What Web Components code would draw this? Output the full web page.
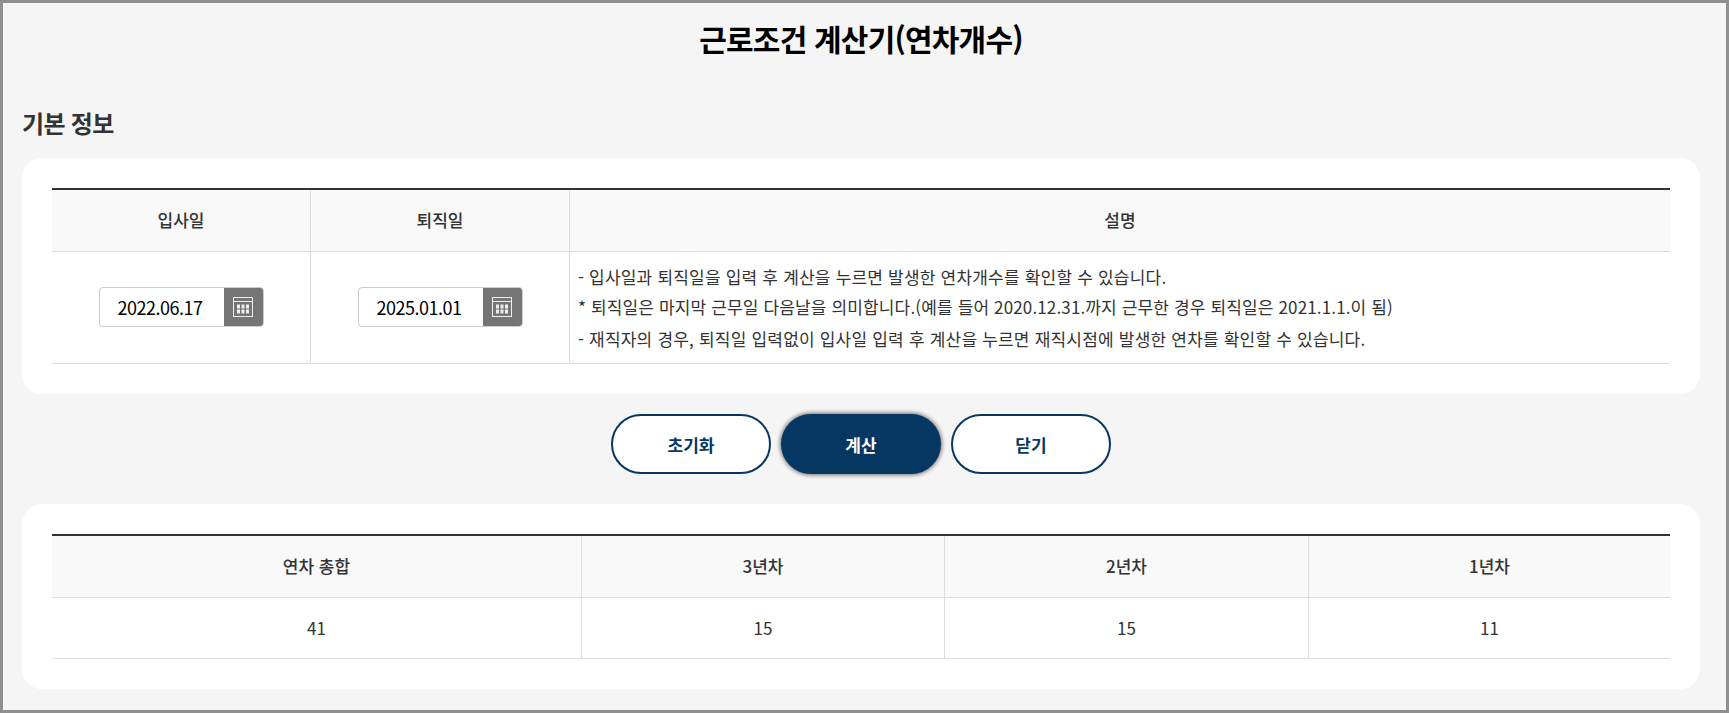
<!DOCTYPE html>
<html lang="ko">
<head>
<meta charset="utf-8">
<title>근로조건 계산기(연차개수)</title>
<style>
html, body { margin: 0; padding: 0; }
body { font-family: "Noto Sans CJK KR", "Noto Sans", sans-serif; color: #333; }
</style>
</head>
<body>
<calc-app>
    <span slot="title">근로조건 계산기(연차개수)</span>
    <section-title>기본 정보</section-title>
    <white-card>
        <data-table columns="259px 259px 1fr" rows="62px 112px">
            <table-cell head>입사일</table-cell>
            <table-cell head>퇴직일</table-cell>
            <table-cell head last>설명</table-cell>
            <table-cell><date-field value="2022.06.17"></date-field></table-cell>
            <table-cell><date-field value="2025.01.01"></date-field></table-cell>
            <table-cell last left>
                <div>- 입사일과 퇴직일을 입력 후 계산을 누르면 발생한 연차개수를 확인할 수 있습니다.</div>
                <div style="margin: -1px 0 1px; letter-spacing: 0.14px">* 퇴직일은 마지막 근무일 다음날을 의미합니다.(예를 들어 2020.12.31.까지 근무한 경우 퇴직일은 2021.1.1.이 됨)</div>
                <div>- 재직자의 경우, 퇴직일 입력없이 입사일 입력 후 계산을 누르면 재직시점에 발생한 연차를 확인할 수 있습니다.</div>
            </table-cell>
        </data-table>
    </white-card>
    <button-row>
        <pill-button>초기화</pill-button>
        <pill-button primary>계산</pill-button>
        <pill-button>닫기</pill-button>
    </button-row>
    <white-card>
        <data-table columns="530px 363px 364px 1fr" rows="62px 61px">
            <table-cell head>연차 총합</table-cell>
            <table-cell head>3년차</table-cell>
            <table-cell head>2년차</table-cell>
            <table-cell head last>1년차</table-cell>
            <table-cell>41</table-cell>
            <table-cell>15</table-cell>
            <table-cell>15</table-cell>
            <table-cell last>11</table-cell>
        </data-table>
    </white-card>
</calc-app>

<script>
// --- страница целиком ---
class CalcApp extends HTMLElement {
    constructor() {
        super();
        this.attachShadow({mode: 'open'});
        this.shadowRoot.innerHTML = `<style>
            :host { display: block; box-sizing: border-box; width: 100%; height: 713px; overflow: hidden;
                    border: 3px solid #8f8f8f; background: #f5f5f5; padding: 0 26px 0 19px; }
            h1 { margin: 0; height: 74px; line-height: 71px; text-align: center; font-size: 30px; font-weight: 700;
                 color: #000; letter-spacing: -0.8px; }
        </style><h1><slot name="title"></slot></h1><slot></slot>`;
    }
}
customElements.define('calc-app', CalcApp);

class SectionTitle extends HTMLElement {
    constructor() {
        super();
        this.attachShadow({mode: 'open'});
        this.shadowRoot.innerHTML = `<style>
            :host { display: block; height: 81px; line-height: 91px; font-size: 24px; font-weight: 700;
                    color: #333; letter-spacing: -0.7px; }
        </style><slot></slot>`;
    }
}
customElements.define('section-title', SectionTitle);

class WhiteCard extends HTMLElement {
    constructor() {
        super();
        this.attachShadow({mode: 'open'});
        this.shadowRoot.innerHTML = `<style>
            :host { display: block; background: #fff; border-radius: 20px; padding: 30px; }
        </style><slot></slot>`;
    }
}
customElements.define('white-card', WhiteCard);

// --- таблица на grid, ячейки приходят через slot ---
class DataTable extends HTMLElement {
    constructor() {
        super();
        this.attachShadow({mode: 'open'});
        this.shadowRoot.innerHTML = `<style>
            :host { display: grid; border-top: 2px solid #333; }
        </style><slot></slot>`;
    }
    connectedCallback() {
        this.style.gridTemplateColumns = this.getAttribute('columns');
        this.style.gridTemplateRows = this.getAttribute('rows');
    }
}
customElements.define('data-table', DataTable);

class TableCell extends HTMLElement {
    constructor() {
        super();
        this.attachShadow({mode: 'open'});
        this.shadowRoot.innerHTML = `<style>
            :host { display: flex; flex-direction: column; align-items: center; justify-content: center;
                    box-sizing: border-box; border-right: 1px solid #ddd; border-bottom: 1px solid #ddd;
                    padding-bottom: 2px; font-size: 17px; color: #333; background: #fff; }
            :host([head]) { background: #f9f9f9; font-weight: 500; }
            :host([last]) { border-right: 0; }
            :host([left]) { align-items: flex-start; padding: 0 0 0 8px; line-height: 31px; letter-spacing: 0.2px; }
        </style><slot></slot>`;
    }
}
customElements.define('table-cell', TableCell);

class DateField extends HTMLElement {
    constructor() {
        super();
        this.attachShadow({mode: 'open'});
        this.shadowRoot.innerHTML = `<style>
            :host { display: flex; box-sizing: border-box; width: 165px; height: 40px; background: #fff;
                    border: 1px solid #ccc; border-radius: 4px; overflow: hidden; }
            .val { flex: 1; padding-left: 18px; line-height: 38px; font-size: 18px; color: #000; letter-spacing: -0.5px; }
            .btn { width: 39px; background: #757575; display: flex; align-items: center; justify-content: center; }
            svg { display: block; }
        </style>
        <div class="val"></div>
        <div class="btn">
            <svg width="20" height="20" viewBox="0 0 20 20" fill="none">
                <rect x="0.5" y="0.5" width="19" height="19" stroke="#eee"/>
                <path d="M0.5 4.5H19.5" stroke="#eee"/>
                <path d="M4 7.5h3v4H4zM8.5 7.5h3v4h-3zM13 7.5h3v4h-3zM4 12.5h3v4H4zM8.5 12.5h3v4h-3zM13 12.5h3v4h-3z" fill="#eee"/>
            </svg>
        </div>`;
    }
    connectedCallback() {
        this.shadowRoot.querySelector('.val').textContent = this.getAttribute('value');
    }
}
customElements.define('date-field', DateField);

class ButtonRow extends HTMLElement {
    constructor() {
        super();
        this.attachShadow({mode: 'open'});
        this.shadowRoot.innerHTML = `<style>
            :host { display: flex; justify-content: center; gap: 10px; padding: 20px 0 30px; }
        </style><slot></slot>`;
    }
}
customElements.define('button-row', ButtonRow);

class PillButton extends HTMLElement {
    constructor() {
        super();
        this.attachShadow({mode: 'open'});
        this.shadowRoot.innerHTML = `<style>
            :host { display: flex; align-items: center; justify-content: center; box-sizing: border-box;
                    width: 160px; height: 60px; border-radius: 30px; background: #fff; border: 2px solid #063763;
                    color: #063763; font-size: 17px; font-weight: 700; }
            :host([primary]) { background: #063763; color: #fff; box-shadow: 0 0 4px 1px rgba(0,0,0,.55); }
        </style><slot></slot>`;
    }
}
customElements.define('pill-button', PillButton);
</script>
</body>
</html>
